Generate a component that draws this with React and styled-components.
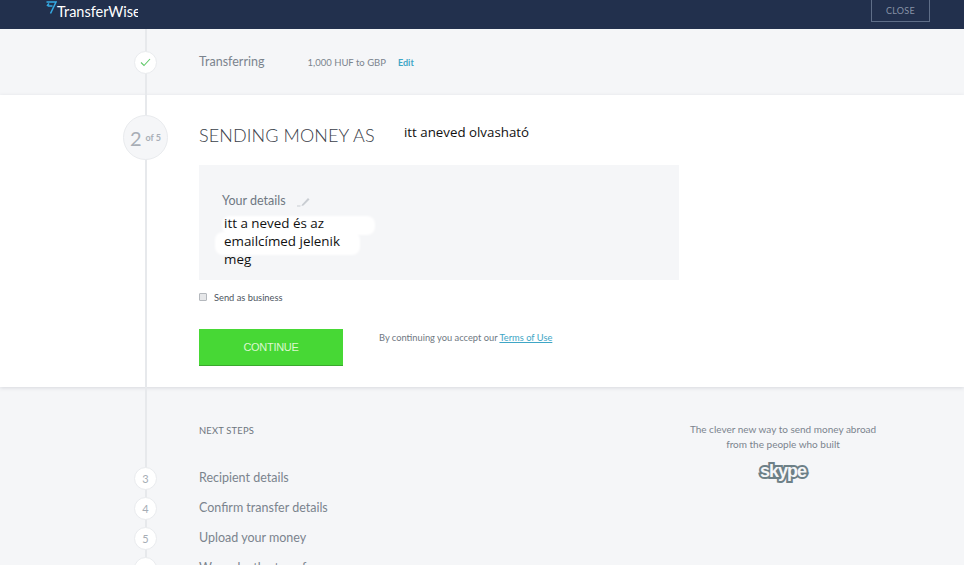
import React from "react"
import styled, { createGlobalStyle } from "styled-components"

const GlobalStyle = createGlobalStyle`
  html, body {
    margin: 0;
    padding: 0;
    height: 565px;
    overflow: hidden;
    background: #f5f6f8;
  }
  * {
    box-sizing: border-box;
  }
`

const Page = styled.div`
  position: relative;
  width: 964px;
  height: 565px;
  overflow: hidden;
  font-family: "Lato", "Liberation Sans", sans-serif;
  color: #7b848e;
`

const Header = styled.header`
  height: 29px;
  background: #22304d;
  display: flex;
  justify-content: space-between;
  align-items: flex-start;
  padding: 0 34px 0 46px;
`

const Logo = styled.div`
  width: 92px;
  height: 29px;
  overflow: hidden;
  display: flex;
  align-items: flex-start;
  color: #fff;
  font-size: 14.5px;
  line-height: 22px;
  white-space: nowrap;
  svg {
    flex: none;
    margin-top: 1px;
  }
`

const LogoText = styled.span`
  margin-top: 1px;
`

const CloseButton = styled.div`
  width: 59px;
  height: 22px;
  border: 1px solid #5f6e88;
  border-top: 0;
  color: #8792a6;
  font-size: 9px;
  letter-spacing: 0.3px;
  display: flex;
  align-items: center;
  justify-content: center;
`

const Rail = styled.div`
  position: absolute;
  top: 29px;
  bottom: 0;
  left: 145px;
  width: 2px;
  background: #e7e9ec;
  z-index: 2;
`

const Row = styled.div`
  display: flex;
  align-items: ${p => p.$align || "center"};
`

const MarkerCell = styled.div`
  width: 199px;
  flex: none;
  padding-left: ${p => 145.5 - p.$size / 2}px;
`

const Marker = styled.div`
  position: relative;
  z-index: 3;
  width: ${p => p.$size}px;
  height: ${p => p.$size}px;
  border-radius: 50%;
  display: flex;
  align-items: center;
  justify-content: center;
  background: ${p => p.$fill || "#fff"};
  border: 1px solid #e9ebee;
  color: #a6adb5;
  font-size: 11px;
`

const DoneSection = styled.section`
  height: 66px;
  background: #f5f6f8;
  display: flex;
  align-items: center;
`

const DoneTitle = styled.div`
  width: 108.5px;
  font-size: 12.5px;
  margin-top: -1px;
`

const DoneInfo = styled.div`
  font-size: 9.5px;
  width: 90.5px;
`

const EditLink = styled.a`
  font-size: 9px;
  font-weight: 700;
  color: #3ea6c6;
`

const MainSection = styled.section`
  position: relative;
  height: 292px;
  background: #fff;
  padding-top: 20px;
  box-shadow: 0 1px 4px rgba(60, 70, 85, 0.16);
`

const BigNumber = styled.span`
  font-size: 20px;
  color: #a8aeb6;
  margin-right: 4px;
`

const SmallOf = styled.span`
  font-size: 9px;
  font-weight: 700;
  color: #a8aeb6;
`

const Heading = styled.h1`
  margin: -5px 0 0;
  width: 205px;
  font-size: 18px;
  font-weight: 300;
  color: #3a4049;
  white-space: nowrap;
  letter-spacing: 0.1px;
`

const HandNote = styled.div`
  font-family: "Open Sans", "Liberation Sans", sans-serif;
  font-size: 13.3px;
  color: #111;
  margin-top: -12px;
`

const Content = styled.div`
  margin-left: 199px;
  width: 480px;
`

const Card = styled.div`
  position: relative;
  height: 115px;
  margin-top: 5px;
  padding: 28px 23px 0;
  background: #f5f6f8;
`

const CardTitle = styled.div`
  display: flex;
  align-items: center;
  gap: 11px;
  font-size: 12.5px;
  line-height: 16px;
  color: #6f7882;
`

const Blot = styled.div`
  position: absolute;
  left: 23px;
  top: 51px;
  width: 153px;
  height: 19px;
  background: #fff;
  border-radius: 8px;
  filter: blur(1px);
`

const BlotLow = styled(Blot)`
  left: 16px;
  top: 67px;
  width: 145px;
  height: 23px;
`

const Details = styled.div`
  position: relative;
  width: 126px;
  margin: 5px 0 0 2px;
  font-family: "Open Sans", "Liberation Sans", sans-serif;
  font-size: 13.4px;
  line-height: 18px;
  color: #111;
`

const CheckRow = styled.label`
  display: flex;
  align-items: center;
  gap: 7px;
  margin-top: 12px;
  height: 10px;
  font-size: 9.3px;
  color: #4d555e;
`

const CheckBox = styled.span`
  width: 8px;
  height: 8px;
  border: 1px solid #b4b8bd;
  border-radius: 1px;
  background: #e6e7e9;
`

const ActionRow = styled.div`
  display: flex;
  gap: 36px;
  margin-top: 27px;
`

const ContinueButton = styled.div`
  width: 144px;
  height: 37px;
  display: flex;
  align-items: center;
  justify-content: center;
  background: #47d835;
  border-bottom: 1px solid #3aa82d;
  color: #dcf7cf;
  font-family: "Liberation Sans", sans-serif;
  font-size: 11px;
  letter-spacing: -0.3px;
`

const Terms = styled.div`
  font-size: 9.3px;
  line-height: 18px;
  color: #6f7882;
  a {
    color: #3ea6c6;
    text-decoration: underline;
  }
`

const NextSection = styled.section`
  display: flex;
  justify-content: space-between;
  padding: 38px 66px 0 0;
`

const StepsColumn = styled.div`
  flex: 1;
`

const NextLabel = styled.div`
  margin: 0 0 26px 199px;
  font-size: 9.4px;
  line-height: 12px;
  letter-spacing: 0.2px;
  color: #6d757e;
`

const StepLabel = styled.div`
  font-size: 12.5px;
  margin-top: -2px;
  white-space: nowrap;
`

const StepRow = styled(Row)`
  height: 30px;
`

const Pitch = styled.aside`
  width: 230px;
  margin-top: -3px;
  text-align: center;
  font-size: 10px;
  line-height: 15px;
  color: #7b848e;
  svg {
    display: block;
    margin: 8px auto 0;
  }
`

const steps = [
  { number: 3, label: "Recipient details" },
  { number: 4, label: "Confirm transfer details" },
  { number: 5, label: "Upload your money" },
  { number: "", label: "We make the transfer" },
]

const App = () => {
  return (
    <Page>
      <GlobalStyle />
      <Rail />
      <Header>
        <Logo>
          <svg width="11" height="13" viewBox="0 0 11 13">
            <path d="M0.5 1H10L4.5 12.5M2 5H6.5M1 5L3 2.5" fill="none" stroke="#35a9e2" strokeWidth="1.5" />
          </svg>
          <LogoText>TransferWise</LogoText>
        </Logo>
        <CloseButton>CLOSE</CloseButton>
      </Header>

      <DoneSection>
        <MarkerCell $size={23}>
          <Marker $size={23}>
            <svg width="11" height="9" viewBox="0 0 11 9">
              <path d="M1 4.5L4 7.5L10 1" fill="none" stroke="#62c96a" strokeWidth="1.1" />
            </svg>
          </Marker>
        </MarkerCell>
        <DoneTitle>Transferring</DoneTitle>
        <DoneInfo>1,000 HUF to GBP</DoneInfo>
        <EditLink>Edit</EditLink>
      </DoneSection>

      <MainSection>
        <Row>
          <MarkerCell $size={45}>
            <Marker $size={45} $fill="#f5f6f8">
              <BigNumber>2</BigNumber>
              <SmallOf>of 5</SmallOf>
            </Marker>
          </MarkerCell>
          <Heading>SENDING MONEY AS</Heading>
          <HandNote>itt aneved olvasható</HandNote>
        </Row>
        <Content>
          <Card>
            <Blot />
            <BlotLow />
            <CardTitle>
              Your details
              <svg width="14" height="12" viewBox="0 0 14 12">
                <path d="M5 9.5L11 3L12.5 4.5L6.5 10.5L4.5 11Z" fill="#c9cdd2" />
                <path d="M0 11H3.5" stroke="#c9cdd2" strokeWidth="1" />
              </svg>
            </CardTitle>
            <Details>itt a neved és az emailcímed jelenik meg</Details>
          </Card>
          <CheckRow>
            <CheckBox />
            Send as business
          </CheckRow>
          <ActionRow>
            <ContinueButton>CONTINUE</ContinueButton>
            <Terms>By continuing you accept our <a>Terms of Use</a></Terms>
          </ActionRow>
        </Content>
      </MainSection>

      <NextSection>
        <StepsColumn>
          <NextLabel>NEXT STEPS</NextLabel>
          {steps.map(step => (
            <StepRow key={step.label}>
              <MarkerCell $size={23}>
                <Marker $size={23}>{step.number}</Marker>
              </MarkerCell>
              <StepLabel>{step.label}</StepLabel>
            </StepRow>
          ))}
        </StepsColumn>
        <Pitch>
          The clever new way to send money abroad<br />
          from the people who built
          <svg width="54" height="24" viewBox="0 0 54 24">
            <text
              x="27"
              y="17"
              textAnchor="middle"
              fontFamily="Liberation Sans, sans-serif"
              fontSize="18"
              fontWeight="700"
              letterSpacing="-1"
              fill="#f5f6f8"
              stroke="#6d8087"
              strokeWidth="4"
              paintOrder="stroke"
            >
              skype
            </text>
          </svg>
        </Pitch>
      </NextSection>
    </Page>
  )
}

export default App
